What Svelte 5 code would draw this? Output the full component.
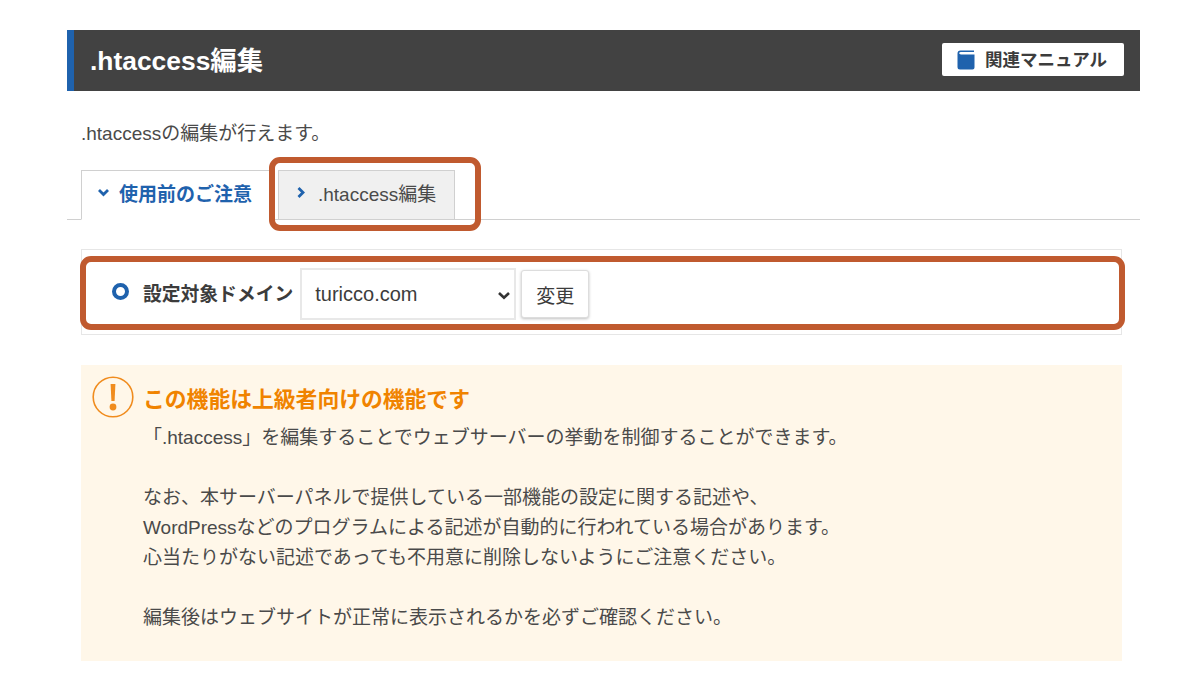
<script>
  const domains = ['turicco.com'];
  let domain = $state(domains[0]);
</script>

<div class="page">
  <header class="title-bar">
    <h1>.htaccess編集</h1>
    <a class="manual" href="#manual">
      <svg width="21" height="21" viewBox="0 0 21 21" aria-hidden="true">
        <path d="M2.5 4.5 Q2.5 1.5 5.5 1.5 H19 V3 H6 Q4.2 3 4.2 4.3 Q4.2 5.4 6 5.4 H19.5 V18.5 Q19.5 20.5 17.5 20.5 H5 Q2.5 20.5 2.5 18 Z" fill="#1f62ad" />
      </svg>
      <span>関連マニュアル</span>
    </a>
  </header>

  <div class="content">
    <p class="lead">.htaccessの編集が行えます。</p>
  </div>

  <nav class="tabs">
    <div class="tab active">
      <svg width="13" height="9" viewBox="0 0 13 9" aria-hidden="true"><path d="M2 2 6.5 6.5 11 2" fill="none" stroke="#1f62ad" stroke-width="2.8" /></svg>
      使用前のご注意
    </div>
    <div class="tab">
      <svg width="10" height="13" viewBox="0 0 10 13" aria-hidden="true"><path d="M2.5 2 7 6.5 2.5 11" fill="none" stroke="#1f62ad" stroke-width="2.8" /></svg>
      <span class="tab-label">.htaccess編集</span>
      <div class="callout tab-callout"></div>
    </div>
  </nav>

  <div class="content">
    <section class="domain-box">
      <span class="ring"></span>
      <strong>設定対象ドメイン</strong>
      <div class="select-wrap">
        <select bind:value={domain}>
          {#each domains as d}
            <option value={d}>{d}</option>
          {/each}
        </select>
        <svg class="select-arrow" width="14" height="9" viewBox="0 0 14 9" aria-hidden="true"><path d="M2 2 7 6.8 12 2" fill="none" stroke="#333" stroke-width="2.6" /></svg>
      </div>
      <button type="button">変更</button>
      <div class="callout domain-callout"></div>
    </section>

    <section class="notice">
      <h2>
        <svg width="42" height="42" viewBox="0 0 42 42" aria-hidden="true">
          <circle cx="21" cy="21" r="19.8" fill="none" stroke="#f08c1e" stroke-width="1.6" />
          <path d="M18.6 8 H23.4 L22.6 25 H19.4 Z" fill="#f08c1e" />
          <circle cx="21" cy="31" r="3.4" fill="#f08c1e" />
        </svg>
        この機能は上級者向けの機能です
      </h2>
      <div class="notice-body">
        <p>「.htaccess」を編集することでウェブサーバーの挙動を制御することができます。</p>
        <p>なお、本サーバーパネルで提供している一部機能の設定に関する記述や、<br />WordPressなどのプログラムによる記述が自動的に行われている場合があります。<br />心当たりがない記述であっても不用意に削除しないようにご注意ください。</p>
        <p>編集後はウェブサイトが正常に表示されるかを必ずご確認ください。</p>
      </div>
    </section>
  </div>
</div>

<style>
  :global(body) {
    margin: 0;
    background: #fff;
  }

  .page {
    box-sizing: border-box;
    width: 1200px;
    height: 675px;
    overflow: hidden;
    padding: 30px 60px 0 67px;
    font-family: 'Liberation Sans', Arial, 'Noto Sans CJK JP', sans-serif;
    color: #4a4a4a;
  }

  .title-bar {
    box-sizing: border-box;
    height: 61px;
    display: flex;
    align-items: center;
    justify-content: space-between;
    padding: 0 16px 0 16px;
    background: #424242;
    border-left: 7px solid #1f62ad;
  }

  h1 {
    margin: 0 0 5px;
    font-size: 26.4px;
    font-weight: 700;
    color: #fff;
  }

  .manual {
    box-sizing: border-box;
    width: 182px;
    height: 33px;
    margin-bottom: 2px;
    display: flex;
    align-items: center;
    gap: 9px;
    padding: 0 0 3px 13px;
    background: #fff;
    border-radius: 2px;
    color: #3c3c3c;
    font-size: 17.5px;
    font-weight: 700;
    text-decoration: none;
  }

  .manual svg {
    margin-top: 3px;
  }

  .content {
    padding-left: 14px;
    padding-right: 18px;
  }

  .lead {
    margin: 32px 0 0;
    font-size: 19px;
    line-height: 22px;
  }

  .tabs {
    box-sizing: border-box;
    height: 54px;
    margin-top: 21px;
    display: flex;
    align-items: flex-end;
    gap: 7px;
    padding-left: 14px;
    border-bottom: 1px solid #d0d0d0;
  }

  .tab {
    position: relative;
    box-sizing: border-box;
    height: 50px;
    width: 177px;
    margin-bottom: -1px;
    display: flex;
    align-items: center;
    gap: 12px;
    padding: 0 0 5px 17px;
    background: #f0f0f0;
    border: 1px solid #d0d0d0;
    font-size: 19px;
    color: #4a4a4a;
  }

  .tab.active {
    width: 190px;
    background: #fff;
    border-bottom-color: #fff;
    gap: 9px;
    padding-left: 15px;
    color: #1f62ad;
    font-weight: 700;
  }

  /* orange annotation frames drawn over the screenshot */
  .callout {
    position: absolute;
    box-sizing: border-box;
    border: 6px solid #c05a2f;
    border-radius: 11px;
    pointer-events: none;
  }

  .tab-callout {
    left: -10px;
    top: -14px;
    width: 212px;
    height: 74px;
  }

  .domain-box {
    position: relative;
    box-sizing: border-box;
    height: 86px;
    margin-top: 29px;
    display: flex;
    align-items: center;
    padding-left: 30px;
    border: 1px solid #e6e6e6;
  }

  .ring {
    box-sizing: border-box;
    width: 17px;
    height: 17px;
    margin: 0 14px 2px 0;
    border: 4.5px solid #1f62ad;
    border-radius: 50%;
  }

  .domain-box strong {
    font-size: 18.8px;
    margin-right: 7px;
    color: #3c3c3c;
  }

  .select-wrap {
    position: relative;
    display: flex;
    margin-top: 4px;
  }

  select {
    box-sizing: border-box;
    width: 216px;
    height: 52px;
    padding-left: 13px;
    appearance: none;
    background: #fff;
    border: 2px solid #e8e8e8;
    border-radius: 0;
    font-family: inherit;
    font-size: 20px;
    color: #3c3c3c;
  }

  .select-arrow {
    position: absolute;
    right: 5px;
    top: 23px;
    pointer-events: none;
  }

  button {
    box-sizing: border-box;
    width: 68px;
    height: 48px;
    margin: 4px 0 0 5px;
    background: #fff;
    border: 1px solid #ddd;
    border-radius: 3px;
    box-shadow: 0 1px 3px rgba(0, 0, 0, 0.25);
    font-family: inherit;
    font-size: 19px;
    color: #3c3c3c;
  }

  .domain-callout {
    left: -2px;
    top: 6px;
    width: 1045px;
    height: 74px;
  }

  .notice {
    box-sizing: border-box;
    height: 296px;
    margin-top: 30px;
    padding: 11px 11px 0;
    background: #fff7e9;
  }

  h2 {
    margin: 0;
    display: flex;
    align-items: center;
    gap: 9px;
    font-size: 21.8px;
    font-weight: 700;
    color: #f08300;
  }

  .notice-body {
    margin-top: 5px;
    padding-left: 51px;
    font-size: 19px;
    line-height: 30px;
  }

  .notice-body p {
    margin: 0 0 30px;
  }
</style>
